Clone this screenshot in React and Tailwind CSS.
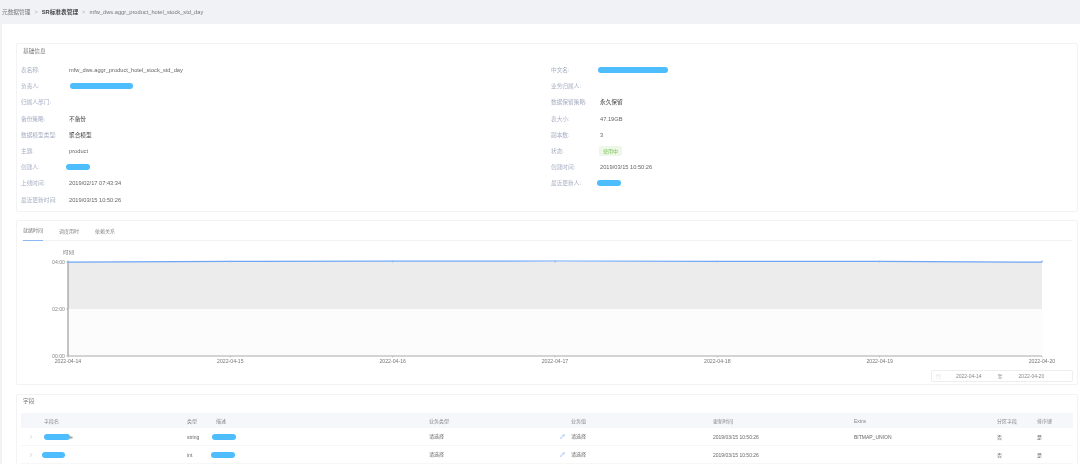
import { ChevronRight, Pencil, Calendar } from 'lucide-react';

const font = { fontFamily: '"Liberation Sans", "Noto Sans CJK SC", sans-serif' };

const Blob = ({ className }) => <span className={`block h-[6px] rounded-full bg-[#4dbdfd] ${className}`}></span>;

const leftInfo = [
  ['表名称:', <span>mfw_dws.aggr_product_hotel_stock_std_day</span>],
  ['负责人:', <Blob className="w-[63px] ml-[1px]" />],
  ['归属人部门:', null],
  ['备份策略:', <span className="text-[#444]">不备份</span>],
  ['数据模型类型:', <span className="text-[#444]">聚合模型</span>],
  ['主题:', <span>product</span>],
  ['创建人:', <Blob className="w-[24px] -ml-[3px]" />],
  ['上线时间:', <span>2019/02/17 07:43:34</span>],
  ['最近更新时间:', <span>2019/03/15 10:50:26</span>],
];

const rightInfo = [
  ['中文名:', <Blob className="w-[70px] -ml-[2px]" />],
  ['业务归属人:', null],
  ['数据保留策略:', <span className="text-[#444]">永久保留</span>],
  ['表大小:', <span>47.19GB</span>],
  ['副本数:', <span>3</span>],
  ['状态:', <span className="-ml-[1px] rounded-[2px] bg-[#eef8e8] px-[4px] py-[1px] text-[5px] text-[#7cc35a]">使用中</span>],
  ['创建时间:', <span>2019/03/15 10:50:26</span>],
  ['最近更新人:', <Blob className="w-[24px] -ml-[3px]" />],
];

const InfoColumn = ({ items, labelWidth }) => (
  <div className="grid auto-rows-[16.2px] items-center">
    {items.map(([label, value]) => (
      <div key={label} className="flex items-center">
        <span className="shrink-0 text-[#a6aec2]" style={{ width: labelWidth }}>{label}</span>
        {value}
      </div>
    ))}
  </div>
);

const ticks = ['2022-04-14', '2022-04-15', '2022-04-16', '2022-04-17', '2022-04-18', '2022-04-19', '2022-04-20'];

// 趋势图
const Chart = () => {
  const x0 = 68;
  const x1 = 1042;
  const step = (x1 - x0) / 6;
  return (
    <svg width="1062" height="118" viewBox="16 250 1062 118" className="block">
      <rect x={x0} y="262" width={x1 - x0} height="47" fill="#ececec" />
      <rect x={x0} y="309" width={x1 - x0} height="47" fill="#fcfcfc" />
      <line x1={x0} y1="261" x2={x0} y2="356" stroke="#888" strokeWidth="1" />
      <line x1={x0} y1="356" x2={x1} y2="356" stroke="#aaa" strokeWidth="1" />
      {[262, 309, 356].map(y => (
        <line key={y} x1="66" y1={y} x2={x0} y2={y} stroke="#999" strokeWidth="0.5" />
      ))}
      {ticks.map((t, i) => (
        <g key={t}>
          <line x1={x0 + i * step} y1="356" x2={x0 + i * step} y2="357.5" stroke="#999" strokeWidth="0.5" />
          <text x={x0 + i * step} y="363" textAnchor="middle" fontSize="5.2" fill="#777">{t}</text>
        </g>
      ))}
      <polyline
        points="68,262.2 230,261.4 393,261.2 555,261 717,261.3 880,261.3 1042,262.2"
        fill="none"
        stroke="#6ea6f5"
        strokeWidth="1.2"
      />
      {ticks.map((t, i) => (
        <circle key={t} cx={x0 + i * step} cy="261.5" r="0.9" fill="#8db8f6" />
      ))}
      <text x="68.5" y="254" textAnchor="middle" fontSize="5.5" fill="#777">时刻</text>
      <text x="65" y="264" textAnchor="end" fontSize="5.2" fill="#888">04:00</text>
      <text x="65" y="311" textAnchor="end" fontSize="5.2" fill="#888">02:00</text>
      <text x="65" y="358" textAnchor="end" fontSize="5.2" fill="#888">00:00</text>
    </svg>
  );
};

const tableCols = 'grid grid-cols-[23px_143px_29px_213px_142px_142px_141px_143px_40px_36px] items-center';

const rows = [
  { blob: 'w-[26px]', offset: '', tail: 'e', type: 'string', descOffset: '-ml-[4px]', extra: 'BITMAP_UNION' },
  { blob: 'w-[23px]', offset: '-ml-[2px]', tail: '', type: 'int', descOffset: '-ml-[5px]', extra: '' },
];

export default function App() {
  return (
    <div className="h-[464px] w-[1080px] overflow-hidden bg-[#f0f2f6] text-[5.7px] leading-[8px] text-[#666] blur-[0.3px]" style={font}>
      <div className="flex h-[24px] items-center gap-[4px] pl-[2px] text-[#777]">
        <span>元数据管理</span>
        <span className="text-[#aaa]">&gt;</span>
        <span className="font-bold text-[#444]">SR标准表管理</span>
        <span className="text-[#aaa]">&gt;</span>
        <span>mfw_dws.aggr_product_hotel_stock_std_day</span>
      </div>

      <div className="ml-[2px] h-[440px] overflow-hidden bg-white pl-[14px] pr-[2px] pt-[19px]">
        {/* 基础信息 */}
        <section className="h-[169px] rounded-[2px] border border-[#f3f3f3] px-[4px]">
          <h2 className="pl-[2px] pt-[3px] text-[#777]">基础信息</h2>
          <div className="mt-[7px] grid grid-cols-[530px_1fr]">
            <InfoColumn items={leftInfo} labelWidth={48} />
            <InfoColumn items={rightInfo} labelWidth={49} />
          </div>
        </section>

        {/* 趋势 */}
        <section className="mt-[8px] h-[165px] rounded-[2px] border border-[#f3f3f3]">
          <div className="mx-[5px] flex h-[20px] items-center gap-[16px] border-b border-[#f3f3f3] pl-[1px] text-[5px] text-[#888]">
            <span className="flex h-[20px] items-center border-b border-[#8db8f6] text-[#777]">就绪时间</span>
            <span>调度用时</span>
            <span>依赖关系</span>
          </div>
          <div className="mt-[9px] -ml-[1px]">
            <Chart />
          </div>
          <div className="mt-[2px] flex justify-end pr-[4px]">
            <div className="flex h-[12px] w-[142px] items-center rounded-[2px] border border-[#eee] text-[5px] text-[#888]">
              <Calendar size={5} strokeWidth={1} className="ml-[4px] text-[#ccc]" />
              <span className="ml-[15px]">2022-04-14</span>
              <span className="ml-[16px]">至</span>
              <span className="ml-[16px]">2022-04-20</span>
            </div>
          </div>
        </section>

        {/* 字段 */}
        <section className="mt-[9px] h-[80px] rounded-[2px] border border-[#f3f3f3] px-[4px]">
          <h2 className="pl-[2px] pt-[2px] text-[#777]">字段</h2>
          <div className={`${tableCols} mt-[8px] h-[15px] bg-[#f5f7fa] text-[5px] text-[#888]`}>
            <span></span>
            <span>字段名</span>
            <span>类型</span>
            <span>描述</span>
            <span>业务类型</span>
            <span>业务值</span>
            <span>更新时间</span>
            <span>Extra</span>
            <span>分区字段</span>
            <span>排序键</span>
          </div>
          {rows.map(row => (
            <div key={row.type} className={`${tableCols} h-[18px] border-b border-[#f7f7f7] text-[5px]`}>
              <ChevronRight size={6} strokeWidth={1.5} className="ml-[7px] text-[#999]" />
              <span className={`flex items-center ${row.offset}`}>
                <Blob className={row.blob} />
                <span>{row.tail}</span>
              </span>
              <span>{row.type}</span>
              <Blob className={`w-[24px] ${row.descOffset}`} />
              <span className="flex items-center justify-between pr-[6px]">
                <span className="relative -top-[1px]">请选择</span>
                <Pencil size={5} strokeWidth={2} className="text-[#6ea6f5]" />
              </span>
              <span className="relative -top-[1px]">请选择</span>
              <span>2019/03/15 10:50:26</span>
              <span>{row.extra}</span>
              <span>否</span>
              <span>是</span>
            </div>
          ))}
        </section>
      </div>
    </div>
  );
}
